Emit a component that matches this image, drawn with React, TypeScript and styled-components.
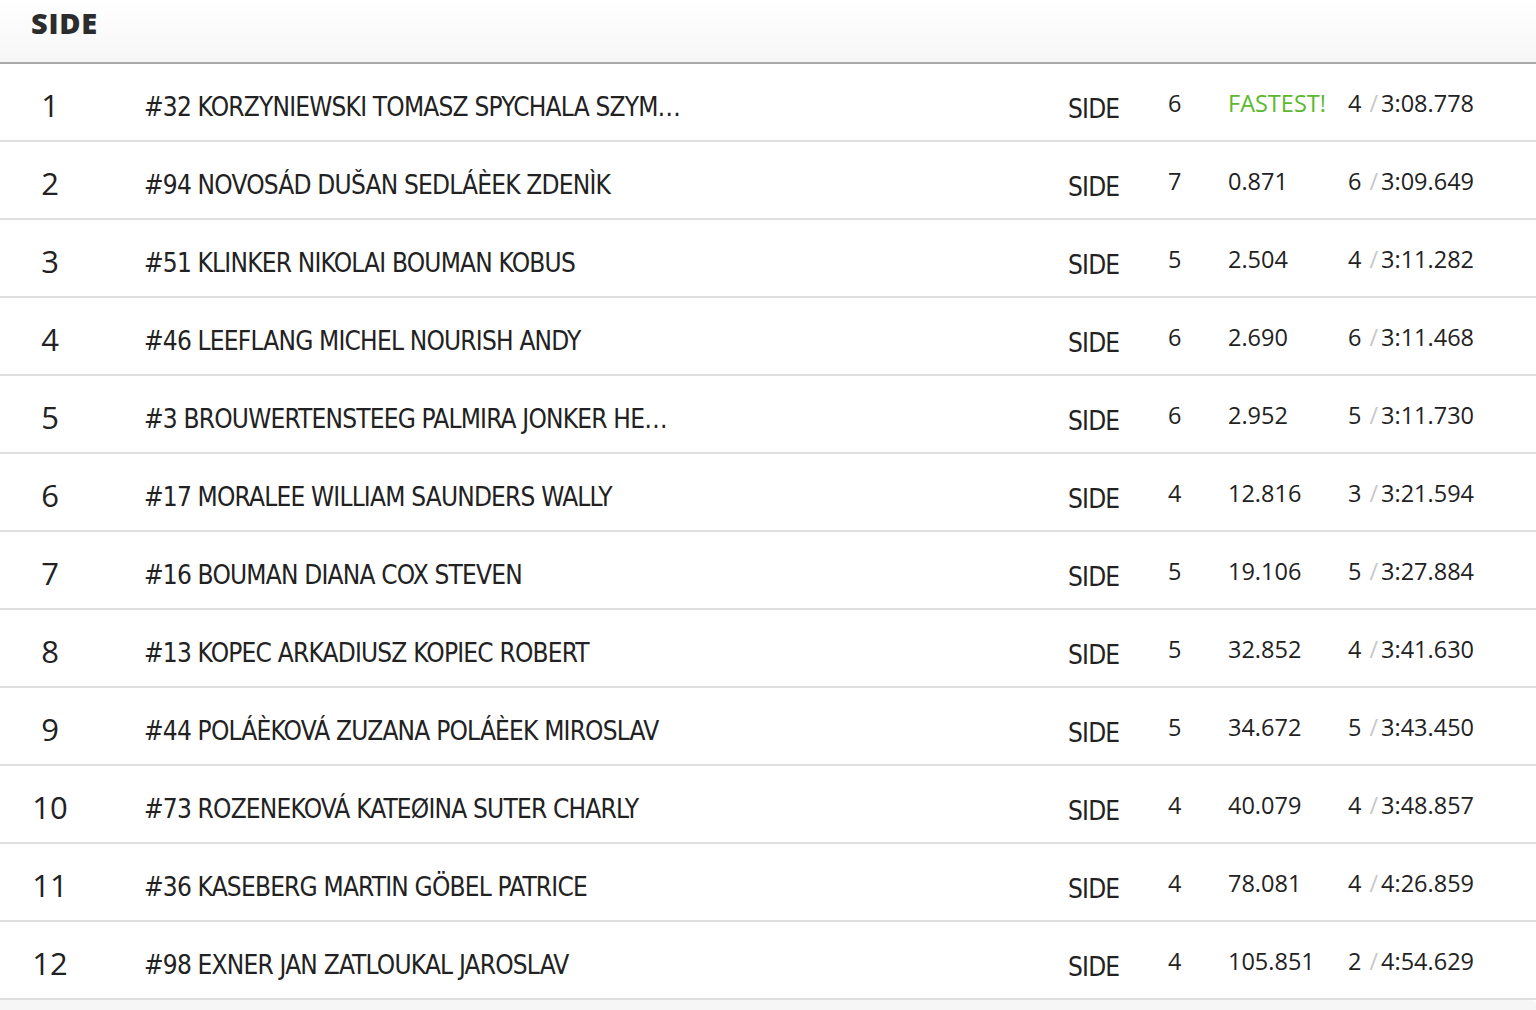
import styled, { createGlobalStyle } from "styled-components";

const Global = createGlobalStyle`
  html, body { margin: 0; padding: 0; background: #ffffff; }
  body { font-family: "Open Sans", "Liberation Sans", sans-serif; color: #222; }
`;

const Board = styled.div`
  width: 1536px;
  background: #fff;
`;

const Header = styled.div`
  height: 64px;
  padding: 4px 0 0 31px;
  box-sizing: border-box;
  background: linear-gradient(#ffffff, #f6f6f6);
  border-bottom: 2px solid #a9a9a9;
  font-family: "Open Sans", "Liberation Sans", sans-serif;
  font-weight: 800;
  font-size: 29px;
  letter-spacing: 0.7px;
  line-height: 38px;
  color: #2c2c2c;
`;

const Row = styled.div`
  display: grid;
  grid-template-columns: 100px 968px 100px 60px 120px 1fr;
  align-items: center;
  height: 78px;
  box-sizing: border-box;
  border-bottom: 2px solid #dedede;
`;

const Rank = styled.div`
  text-align: center;
  font-size: 31px;
  color: #222;
  padding-top: 6px;
`;

const Name = styled.div`
  padding-left: 44px;
  padding-top: 9px;
  font-family: "DejaVu Sans Condensed", "Liberation Sans", sans-serif;
  font-size: 26px;
  letter-spacing: -0.8px;
  color: #222;
  white-space: nowrap;
  overflow: hidden;
  text-overflow: ellipsis;
  max-width: 538px;
`;

const ClassCell = styled.div`
  font-family: "DejaVu Sans Condensed", "Liberation Sans", sans-serif;
  font-size: 26px;
  letter-spacing: -0.8px;
  color: #222;
  padding-top: 14px;
`;

const Cell = styled.div<{ $green?: boolean }>`
  font-size: 23.5px;
  padding-top: 2px;
  color: ${(p) => (p.$green ? "#5cb82e" : "#222")};
`;

const Slash = styled.span`
  color: #c8c8c8;
  margin: 0 3px 0 8px;
`;

const Footer = styled.div`
  height: 12px;
  background: #f6f6f6;
  border-radius: 0 6px 0 0;
`;

type Result = { name: string; laps: number; gap: string; bestLap: number; best: string };

const results: Result[] = [
  { name: "#32 KORZYNIEWSKI TOMASZ SPYCHALA SZYMON", laps: 6, gap: "FASTEST!", bestLap: 4, best: "3:08.778" },
  { name: "#94 NOVOSÁD DUŠAN SEDLÁÈEK ZDENÌK", laps: 7, gap: "0.871", bestLap: 6, best: "3:09.649" },
  { name: "#51 KLINKER NIKOLAI BOUMAN KOBUS", laps: 5, gap: "2.504", bestLap: 4, best: "3:11.282" },
  { name: "#46 LEEFLANG MICHEL NOURISH ANDY", laps: 6, gap: "2.690", bestLap: 6, best: "3:11.468" },
  { name: "#3 BROUWERTENSTEEG PALMIRA JONKER HENNY", laps: 6, gap: "2.952", bestLap: 5, best: "3:11.730" },
  { name: "#17 MORALEE WILLIAM SAUNDERS WALLY", laps: 4, gap: "12.816", bestLap: 3, best: "3:21.594" },
  { name: "#16 BOUMAN DIANA COX STEVEN", laps: 5, gap: "19.106", bestLap: 5, best: "3:27.884" },
  { name: "#13 KOPEC ARKADIUSZ KOPIEC ROBERT", laps: 5, gap: "32.852", bestLap: 4, best: "3:41.630" },
  { name: "#44 POLÁÈKOVÁ ZUZANA POLÁÈEK MIROSLAV", laps: 5, gap: "34.672", bestLap: 5, best: "3:43.450" },
  { name: "#73 ROZENEKOVÁ KATEØINA SUTER CHARLY", laps: 4, gap: "40.079", bestLap: 4, best: "3:48.857" },
  { name: "#36 KASEBERG MARTIN GÖBEL PATRICE", laps: 4, gap: "78.081", bestLap: 4, best: "4:26.859" },
  { name: "#98 EXNER JAN ZATLOUKAL JAROSLAV", laps: 4, gap: "105.851", bestLap: 2, best: "4:54.629" },
];

const App = () => {
  return (
    <Board>
      <Global />
      <Header>SIDE</Header>
      {results.map((r, i) => (
        <Row key={r.name}>
          <Rank>{i + 1}</Rank>
          <Name>{r.name}</Name>
          <ClassCell>SIDE</ClassCell>
          <Cell>{r.laps}</Cell>
          <Cell $green={i === 0}>{r.gap}</Cell>
          <Cell>
            {r.bestLap}
            <Slash>/</Slash>
            {r.best}
          </Cell>
        </Row>
      ))}
      <Footer />
    </Board>
  );
};

export default App;
